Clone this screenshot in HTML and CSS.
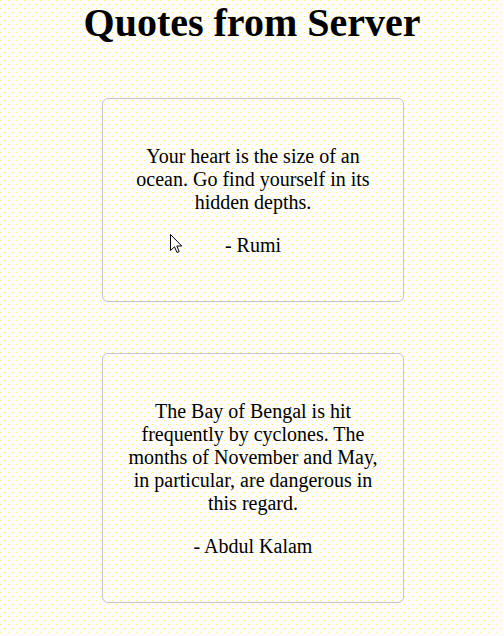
FILE: index.html
```html
<!DOCTYPE html>
<html>
<head>
<meta charset="utf-8">
<link rel="stylesheet" href="styles.css">
</head>
<body>
<main class="page">
  <h1 class="title">Quotes from Server</h1>
  <div class="quotes">
    <div class="card">
      <p class="quote">Your heart is the size of an ocean. Go find yourself in its hidden depths.</p>
      <p class="author">- Rumi</p>
    </div>
    <div class="card">
      <p class="quote">The Bay of Bengal is hit frequently by cyclones. The months of November and May, in particular, are dangerous in this regard.</p>
      <p class="author">- Abdul Kalam</p>
    </div>
  </div>
</main>
<svg class="cursor" width="13" height="20" viewBox="0 0 13 20" aria-hidden="true">
  <path d="M0.5 0.5 L0.5 16.5 L4.5 12.8 L7 18.5 L9.2 17.6 L6.8 12 L11.8 12 Z" fill="#fff" stroke="#000" stroke-width="1" stroke-linejoin="miter"/>
</svg>
</body>
</html>
```
FILE: styles.css
```css
html, body {
  margin: 0;
  padding: 0;
}
body {
  background-color: #fcfcff;
  background-image:
    radial-gradient(circle at 0.5px 0.5px, #fff36a 0.65px, transparent 0.8px),
    radial-gradient(circle at 4.5px 4.5px, #fff36a 0.65px, transparent 0.8px);
  background-size: 8px 8px, 8px 8px;
  font-family: "Liberation Serif", "Times New Roman", serif;
  color: #000;
  min-height: 636px;
  position: relative;
}
.page {
  display: flex;
  flex-direction: column;
  align-items: center;
}
.title {
  margin: 0;
  font-size: 40px;
  font-weight: bold;
  line-height: 46px;
  text-align: center;
}
.quotes {
  display: flex;
  flex-direction: column;
  align-items: center;
  gap: 51px;
  margin-top: 52px;
  padding-left: 2px;
}
.card {
  box-sizing: border-box;
  width: 302px;
  padding: 26px 20px 24px;
  border: 1px solid #c4c4cc;
  border-radius: 6px;
  text-align: center;
  font-size: 20px;
  line-height: 23px;
}
.card p {
  margin: 20px 0;
}
.cursor {
  position: absolute;
  left: 170px;
  top: 234px;
}
```
